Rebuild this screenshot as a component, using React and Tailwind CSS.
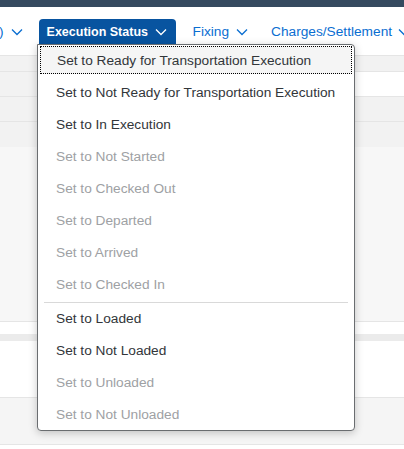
import React from "react";

const items = [
  { label: "Set to Ready for Transportation Execution", enabled: true, focused: true },
  { label: "Set to Not Ready for Transportation Execution", enabled: true },
  { label: "Set to In Execution", enabled: true },
  { label: "Set to Not Started", enabled: false },
  { label: "Set to Checked Out", enabled: false },
  { label: "Set to Departed", enabled: false },
  { label: "Set to Arrived", enabled: false },
  { label: "Set to Checked In", enabled: false },
  { separator: true },
  { label: "Set to Loaded", enabled: true },
  { label: "Set to Not Loaded", enabled: true },
  { label: "Set to Unloaded", enabled: false },
  { label: "Set to Not Unloaded", enabled: false },
];

const Chevron = ({ className }) => (
  <svg width="12" height="8" viewBox="0 0 12 8" className={`shrink-0 ${className}`}>
    <polyline
      points="1,1.5 6,6.5 11,1.5"
      fill="none"
      stroke="currentColor"
      strokeWidth="1.3"
    />
  </svg>
);

const App = () => {
  return (
    <div className="relative w-[404px] h-[449px] overflow-hidden bg-white font-['Liberation_Sans',Arial,sans-serif]">
      {/* SHELL BAR */}
      <div className="h-[7px] bg-[#354a5f]" />

      {/* TOOLBAR */}
      <div className="h-[48px] flex items-start pt-[12px] text-[13.7px] text-[#0a6ed1] whitespace-nowrap">
        <div className="shrink-0 flex items-center h-[25px] -ml-[1px] pt-[1px]">
          <span>)</span>
          <Chevron className="ml-[7px]" />
        </div>
        <div className="shrink-0 ml-[16px] flex items-center h-[25px] pl-[8px] pt-[1px] bg-[#0854a0] text-white rounded-t-[4px] w-[137px]">
          <span className="text-[12.5px] font-bold">Execution Status</span>
          <Chevron className="ml-[7px]" />
        </div>
        <div className="shrink-0 ml-[17px] flex items-center h-[25px] pt-[1px]">
          <span>Fixing</span>
          <Chevron className="ml-[7px]" />
        </div>
        <div className="shrink-0 ml-[23px] flex items-center h-[25px] pt-[1px]">
          <span>Charges/Settlement</span>
          <Chevron className="ml-[6px]" />
        </div>
      </div>

      {/* TABLE BACKGROUND */}
      <div className="border-t border-[#e5e5e5]">
        <div className="h-[16px] bg-[#f2f2f2] border-b border-[#e5e5e5]" />
        <div className="h-[25px] flex border-b border-[#e5e5e5]">
          <div className="w-[200px] bg-[#f2f2f2]" />
          <div className="flex-1 bg-white" />
        </div>
        <div className="h-[25px] bg-[#f2f2f2] border-b border-[#e5e5e5]" />
        <div className="h-[25px] bg-[#f2f2f2]" />
        <div className="h-[175px] bg-[#f7f7f7] border-b border-[#e5e5e5]" />
        <div className="h-[12px] bg-white" />
        <div className="h-[7px] bg-[#ebebeb]" />
        <div className="h-[57px] bg-white border-b border-[#e5e5e5]" />
        <div className="h-[47px] bg-[#f5f5f5] border-b border-[#e5e5e5]" />
      </div>

      {/* MENU */}
      <div className="absolute left-[37px] top-[44px] w-[318px] h-[387px] bg-white border border-[#6a6d70] rounded-b-[4px] rounded-tr-[4px] shadow-[0_2px_8px_rgba(0,0,0,0.22)] text-[13.7px]">
        {items.map((item, index) =>
          item.separator ? (
            <div key={index} className="mx-[6px] mt-[1px] h-px bg-[#d9d9d9]" />
          ) : (
            <div key={index} className="h-[32px] px-[2px] pt-[1px] pb-[3px]">
              <div
                className={`h-[28px] flex items-center pt-[2px] pl-[16px] whitespace-nowrap ${
                  item.focused
                    ? "bg-[#f5f5f5] border border-dotted border-black pl-[15px]"
                    : ""
                } ${item.enabled ? "text-[#32363a]" : "text-[#9ea1a4]"}`}
              >
                {item.label}
              </div>
            </div>
          )
        )}
      </div>
    </div>
  );
};

export default App;
